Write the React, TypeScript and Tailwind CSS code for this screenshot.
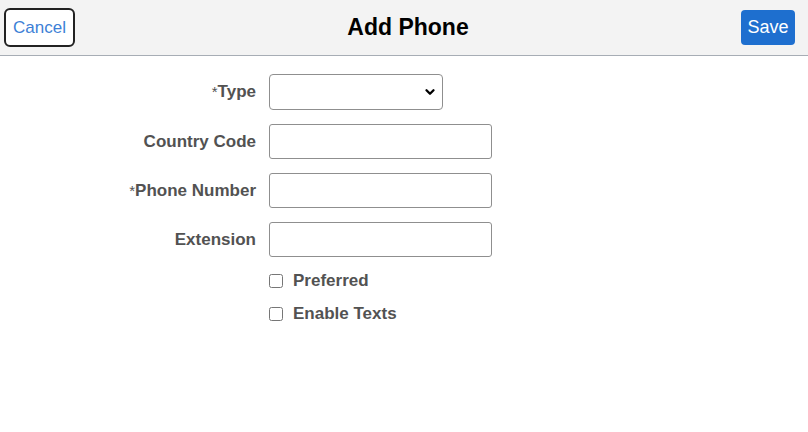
import { ChevronDown } from "lucide-react";

const fields = [
  { label: "Country Code", required: false },
  { label: "Phone Number", required: true },
  { label: "Extension", required: false },
];

function Label({ text, required }: { text: string; required?: boolean }) {
  return (
    <label className="text-right text-[17px] font-bold text-[#525252]">
      {required && <span className="font-normal text-[15px]">*</span>}
      {text}
    </label>
  );
}

export default function App() {
  return (
    <div className="w-[808px] h-[432px] bg-white font-['Liberation_Sans',Arial,sans-serif]">
      <header className="h-[56px] bg-[#f3f3f3] border-b border-[#a7adb5] flex items-center justify-between pl-[4px] pr-[13px]">
        <button className="h-[39px] w-[71px] rounded-[6px] border-2 border-[#222] bg-white text-[17px] text-[#3d7fd6]">
          Cancel
        </button>
        <h1 className="text-[23px] font-bold text-black">Add Phone</h1>
        <button className="h-[35px] w-[54px] rounded-[4px] bg-[#1e6fcf] text-[18px] text-white">
          Save
        </button>
      </header>

      <form className="grid grid-cols-[256px_auto] gap-x-[13px] items-center pt-[18px]">
        <Label text="Type" required />
        <div className="relative w-[174px]">
          <select className="w-full h-[36px] appearance-none rounded-[4px] border border-[#8f8f8f] bg-white px-2" />
          <ChevronDown
            className="absolute right-[6px] top-1/2 -translate-y-1/2 text-black pointer-events-none"
            size={14}
            strokeWidth={4}
          />
        </div>

        {fields.map((f) => (
          <div key={f.label} className="contents">
            <div className="h-[14px] col-span-2" />
            <Label text={f.label} required={f.required} />
            <input
              type="text"
              className="w-[223px] h-[35px] rounded-[3px] border border-[#8f8f8f] bg-white px-2 outline-none"
            />
          </div>
        ))}

        <div className="h-[14px] col-span-2" />
        <div />
        <label className="h-[20px] flex items-center gap-[10px] text-[17px] font-bold text-[#525252]">
          <input type="checkbox" className="w-[14px] h-[14px] m-0" />
          Preferred
        </label>

        <div className="h-[13px] col-span-2" />
        <div />
        <label className="h-[20px] flex items-center gap-[10px] text-[17px] font-bold text-[#525252]">
          <input type="checkbox" className="w-[14px] h-[14px] m-0" />
          Enable Texts
        </label>
      </form>
    </div>
  );
}
